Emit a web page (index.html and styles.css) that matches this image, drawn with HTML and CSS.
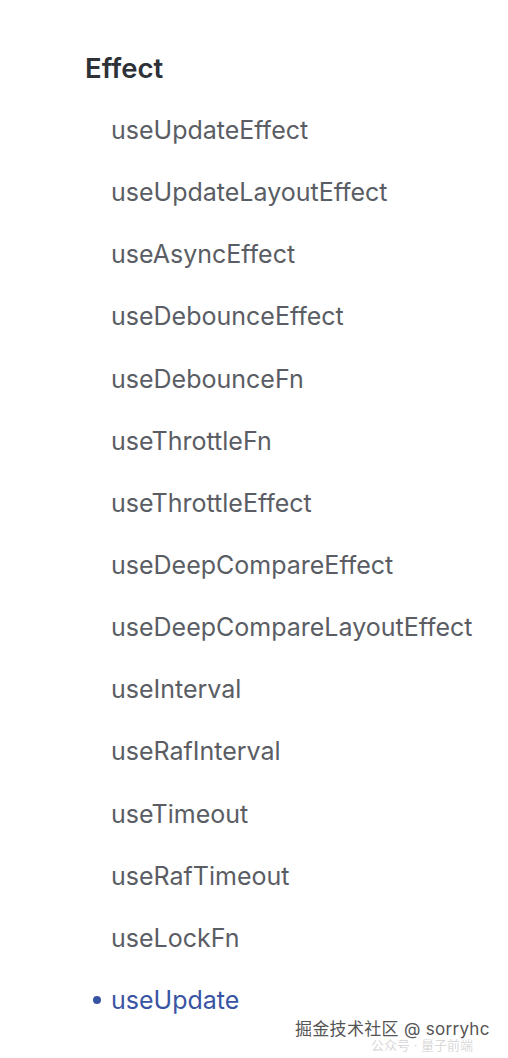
FILE: index.html
```html
<!DOCTYPE html>
<html>
<head>
<meta charset="utf-8">
<link rel="stylesheet" href="styles.css">
</head>
<body>
<div class="page">
  <h2 class="group-title">Effect</h2>
  <ul class="items">
    <li class="item">useUpdateEffect</li>
    <li class="item">useUpdateLayoutEffect</li>
    <li class="item">useAsyncEffect</li>
    <li class="item">useDebounceEffect</li>
    <li class="item">useDebounceFn</li>
    <li class="item">useThrottleFn</li>
    <li class="item">useThrottleEffect</li>
    <li class="item">useDeepCompareEffect</li>
    <li class="item">useDeepCompareLayoutEffect</li>
    <li class="item">useInterval</li>
    <li class="item">useRafInterval</li>
    <li class="item">useTimeout</li>
    <li class="item">useRafTimeout</li>
    <li class="item">useLockFn</li>
    <li class="item active">useUpdate</li>
  </ul>
</div>
<div class="watermark">
  <div class="wm-main">掘金技术社区 @ sorryhc</div>
  <div class="wm-sub">公众号 · 量子前端</div>
</div>
</body>
</html>
```

FILE: styles.css
```css
html, body {
  margin: 0;
  padding: 0;
  background: #ffffff;
}
body {
  font-family: Inter, "Noto Sans CJK SC", sans-serif;
  width: 508px;
  height: 1058px;
  overflow: hidden;
  position: relative;
}
.page {
  padding: 50px 0 0 85px;
}
.group-title {
  margin: 0;
  font-size: 27.5px;
  font-weight: 600;
  color: #2e3137;
  line-height: 36px;
}
.items {
  list-style: none;
  margin: 13px 0 0 0;
  padding: 0 0 0 26px;
}
.item {
  font-size: 25px;
  line-height: 62.14px;
  color: #5a5d64;
  position: relative;
}
.item.active {
  color: #3a54a4;
}
.item.active::before {
  content: "";
  position: absolute;
  left: -18px;
  top: 27px;
  width: 8px;
  height: 8px;
  border-radius: 50%;
  background: #3a54a4;
}
.watermark {
  position: absolute;
  left: 295px;
  top: 1018px;
}
.wm-main {
  font-size: 17px;
  color: #555;
  line-height: 22px;
  letter-spacing: 0.3px;
  white-space: nowrap;
}
.wm-sub {
  position: absolute;
  left: 76px;
  top: 17px;
  font-size: 13px;
  color: rgba(120,120,120,0.3);
  white-space: nowrap;
}
```
